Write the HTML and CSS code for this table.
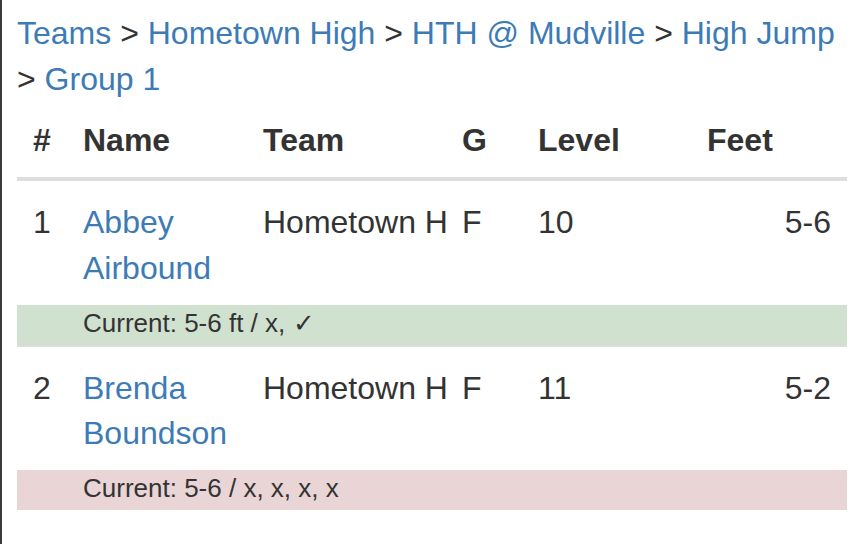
FILE: index.html
```html
<!DOCTYPE html>
<html lang="en">
<head>
<meta charset="utf-8">
<title>High Jump - Group 1</title>
<link rel="stylesheet" href="styles.css">
</head>
<body>
<div class="page">
  <div class="crumbs">
    <a href="#">Teams</a> &gt; <a href="#">Hometown High</a> &gt; <a href="#">HTH @ Mudville</a> &gt; <a href="#">High Jump</a> &gt; <a href="#">Group 1</a>
  </div>
  <table class="results">
    <colgroup>
      <col class="c-num">
      <col class="c-name">
      <col class="c-team">
      <col class="c-g">
      <col class="c-level">
      <col class="c-feet">
    </colgroup>
    <thead>
      <tr>
        <th>#</th>
        <th>Name</th>
        <th>Team</th>
        <th>G</th>
        <th>Level</th>
        <th>Feet</th>
      </tr>
    </thead>
    <tbody>
      <tr class="athlete">
        <td>1</td>
        <td><a href="#">Abbey Airbound</a></td>
        <td class="team">Hometown High</td>
        <td>F</td>
        <td>10</td>
        <td class="feet">5-6</td>
      </tr>
      <tr class="current success">
        <td></td>
        <td colspan="5">Current: 5-6 ft / x, ✓</td>
      </tr>
      <tr class="athlete">
        <td>2</td>
        <td><a href="#">Brenda Boundson</a></td>
        <td class="team">Hometown High</td>
        <td>F</td>
        <td>11</td>
        <td class="feet">5-2</td>
      </tr>
      <tr class="current danger">
        <td></td>
        <td colspan="5">Current: 5-6 / x, x, x, x</td>
      </tr>
    </tbody>
  </table>
</div>
</body>
</html>
```
FILE: styles.css
```css
html, body {
  margin: 0;
  padding: 0;
  background: #fff;
}

body {
  font-family: "Liberation Sans", Helvetica, Arial, sans-serif;
  font-size: 32px;
  line-height: 1.428571;
  color: #333;
}

.page {
  box-sizing: border-box;
  min-height: 100vh;
  border-left: 2px solid #3a3a3a;
  padding: 11px 9px 0 15px;
}

a {
  color: #3d7bb6;
  text-decoration: none;
}

.crumbs {
  margin: 0 0 -3px;
}

.results {
  width: 100%;
  border-collapse: collapse;
  border-spacing: 0;
  table-layout: fixed;
}

.c-num { width: 50px; }
.c-name { width: 180px; }
.c-team { width: 199px; }
.c-g { width: 76px; }
.c-level { width: 169px; }
.c-feet { width: 156px; }

.results th {
  text-align: left;
  font-weight: bold;
  vertical-align: bottom;
  padding: 19px 16px 13px;
  border-bottom: 4px solid #dddddd;
}

.results td {
  padding: 19px 16px 13px;
  vertical-align: top;
}

.results .athlete td {
  border-top: 2px solid #dddddd;
}

.results .team {
  white-space: nowrap;
  overflow: hidden;
}

.results .feet {
  text-align: right;
}

.results .current td {
  font-size: 26px;
  line-height: 35px;
  padding: 1.5px 16px 3.5px;
  border-top: 0;
}

.results .success td {
  background: #d0e1d0;
}

.results .danger td {
  background: #e9d5d5;
}
```
